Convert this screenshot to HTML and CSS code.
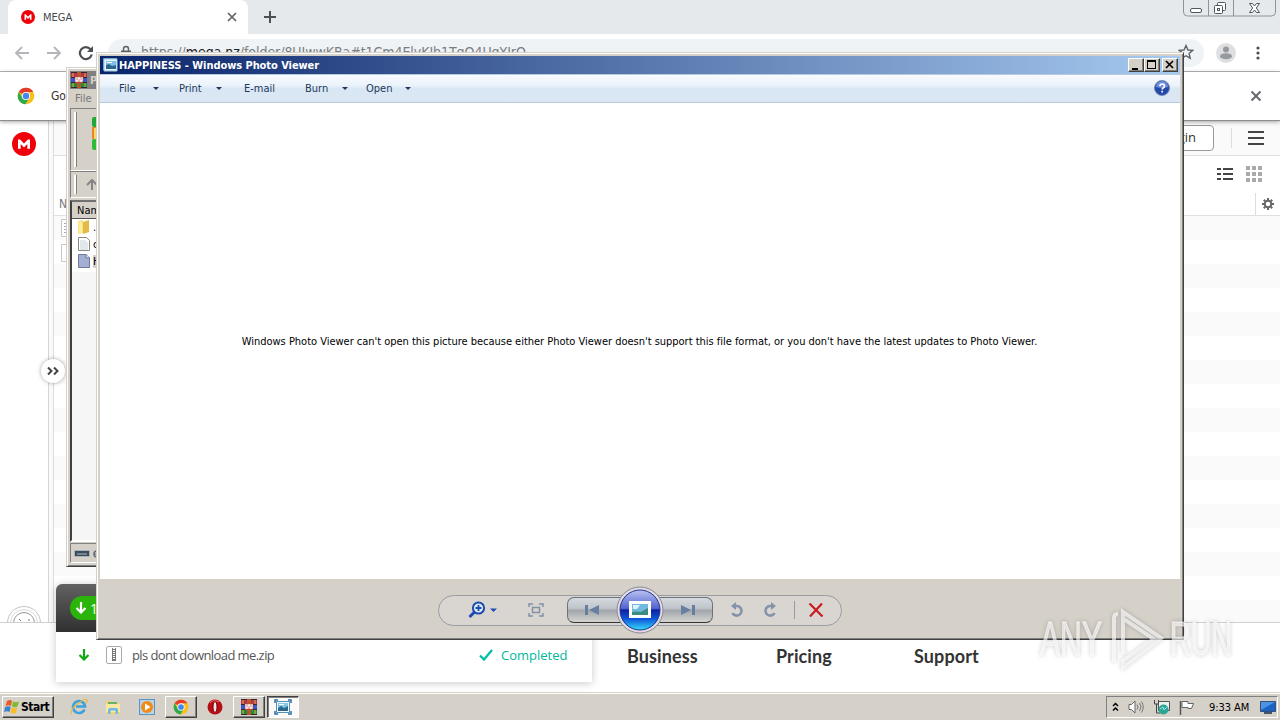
FILE: index.html
```
<!DOCTYPE html>
<html lang="en">
<head>
    <meta charset="UTF-8">
    <meta name="viewport" content="width=device-width, initial-scale=1.0">
    <title>HAPPINESS - Windows Photo Viewer</title>
    <link rel="stylesheet" href="styles.css">
</head>
<body>
    <!-- Shared icons -->
    <svg class="defs" width="0" height="0">
        <symbol id="chrome" viewBox="0 0 18 18">
            <circle cx="9" cy="9" r="8.3" fill="#fbc116"/>
            <path d="M9 9 1.8 4.9A8.3 8.3 0 0 1 16.2 4.9H9z" fill="#e33b2e"/>
            <path d="M1.8 4.9A8.3 8.3 0 0 0 8.3 17.3L12.4 11 9 9 5.6 11z" fill="#2da94f"/>
            <circle cx="9" cy="9" r="4.1" fill="#fff"/>
            <circle cx="9" cy="9" r="3.2" fill="#4486f4"/>
        </symbol>
        <symbol id="mega" viewBox="0 0 24 24">
            <circle cx="12" cy="12" r="12" fill="#f0000a"/>
            <path d="M6 16.8V7.400h2.100l3.900 4 3.900-4H18v9.400h-2.700v-4.700L12 15.400l-3.300-3.300v4.700z" fill="#fff"/>
        </symbol>
        <symbol id="rar" viewBox="0 0 18 18">
            <path d="M1 1h16v5H1z" fill="#b8324a"/>
            <path d="M1 6h16v5H1z" fill="#3c55c8"/>
            <path d="M1 11h16v6H1z" fill="#258a35"/>
            <path d="M1 1h16v1H1zM1 6h16v1H1zM1 11h16v1H1zM1 16h16v1H1z" fill="#3a2330"/>
            <path d="M7 1h4v16H7z" fill="#b3572d"/>
            <path d="M5 6h8v6H5z" fill="#c9432d"/>
            <path d="M6 6v4h2V7h2v3h2V6" fill="none" stroke="#fff" stroke-width="1.3"/>
            <path d="M3 2v4M15 2v4M3 12v4M15 12v4" stroke="#d9b545"/>
        </symbol>
        <symbol id="photo" viewBox="0 0 18 16">
            <path d="M1 1h14v12H1z" fill="#4a88b5"/>
            <path d="M2 2h13v12H2z" fill="#e9f6fc" stroke="#9cc9e2"/>
            <path d="M4 4h10v8H4z" fill="#80bfe4"/>
            <path d="M4 8l3-1 3 2 4-1v4H4z" fill="#2c678e"/>
            <path d="M5 5h5v1H5z" fill="#fff"/>
        </symbol>
        <symbol id="photo-task" viewBox="0 0 18 16">
            <path d="M1 4V1h3M14 1h3v3M17 12v3h-3M4 15H1v-3" fill="none" stroke="#2c6ea3" stroke-width="1.500"/>
            <path d="M2.500 2.500h13v11h-13z" fill="#eef8fd" stroke="#5590b8"/>
            <path d="M4 4h10v8H4z" fill="#86c3e6"/>
            <path d="M4 9l3-2 3 2 4-2v5H4z" fill="#2c678e"/>
            <path d="M5 5h5v1H5z" fill="#fff"/>
        </symbol>
        <linearGradient id="orb" x2="0" y2="1">
            <stop offset="0" stop-color="#b9c3f0"/><stop offset=".46" stop-color="#5263cf"/>
            <stop offset=".5" stop-color="#0c22a4"/><stop offset=".72" stop-color="#0e56d8"/><stop offset="1" stop-color="#37dcff"/>
        </linearGradient>
    </svg>

    <div class="desktop">
        <!-- Browser -->
        <div class="browser">
            <div class="tabstrip">
                <div class="tab">
                    <svg width="14" height="14"><use href="#mega"/></svg>
                    <span>MEGA</span>
                    <svg class="tab-close" width="10" height="10" viewBox="0 0 10 10"><path d="M1 1l8 8M9 1L1 9" stroke="#5f6368" stroke-width="1.7"/></svg>
                </div>
                <svg class="tab-new" width="14" height="14" viewBox="0 0 14 14"><path d="M7 1v12M1 7h12" stroke="#4c4f53" stroke-width="2"/></svg>
                <svg class="caption" width="94" height="18" viewBox="0 0 94 18" fill="none" stroke="#8d949b">
                    <path d="M.5 0v12q0 4 4 4h84q4 0 4-4V0M25.500 0v16M50.500 0v16"/>
                    <rect x="7.500" y="8.500" width="11" height="4" rx="1.500" fill="#fff" stroke="#50565c"/>
                    <rect x="34.500" y="2.500" width="8" height="8" rx="1" fill="#fff" stroke="#50565c"/>
                    <rect x="31.500" y="5.500" width="8" height="8" rx="1" fill="#fff" stroke="#50565c"/>
                    <rect x="34.500" y="8.500" width="2" height="2" stroke="#50565c"/>
                    <path d="M66.500 3.500h3l2 2.500 2-2.500h3l-3.200 4.500 3.200 4.500h-3l-2-2.500-2 2.500h-3l3.200-4.500z" fill="#fff" stroke="#50565c"/>
                </svg>
            </div>
            <div class="toolbar">
                <svg class="nav" width="80" height="16" viewBox="0 0 80 16" fill="none" stroke="#b3b5b8" stroke-width="1.8">
                    <path d="M15 8H2M8 2L2 8l6 6M33 8h13M40 2l6 6-6 6"/>
                    <path d="M76.500 4.200A6 6 0 1 0 77.700 9.500" stroke="#4c4f53" stroke-width="2.200"/>
                    <path d="M79 1v6h-6z" fill="#4c4f53" stroke="none"/>
                </svg>
                <div class="omnibox">
                    <svg width="10" height="14" viewBox="0 0 10 14"><path d="M2.500 6V4a2.500 2.500 0 0 1 5 0v2" fill="none" stroke="#5f6368" stroke-width="1.500"/><path d="M0 5.500h10V13H0z" fill="#5f6368"/></svg>
                    <span class="url">https://<b>mega.nz</b>/folder/8UIwwKBa#t1Cm4ElyKIb1TgO4UgYJrQ</span>
                    <svg class="star" width="16" height="16" viewBox="0 0 16 16"><path d="M8 1.500l2 4.500 4.700.4-3.600 3.100 1.100 4.700L8 11.700l-4.200 2.500 1.100-4.700L1.300 6.400 6 6z" fill="none" stroke="#5f6368" stroke-width="1.400"/></svg>
                </div>
                <svg class="avatar" width="20" height="20" viewBox="0 0 20 20"><circle cx="10" cy="10" r="10" fill="#dedfe1"/><circle cx="10" cy="6.500" r="3" fill="#96999d"/><ellipse cx="10" cy="13.200" rx="6" ry="3" fill="#96999d"/></svg>
                <svg class="dots" width="4" height="14" viewBox="0 0 4 14" fill="#4c4f53"><circle cx="2" cy="2" r="1.600"/><circle cx="2" cy="7" r="1.600"/><circle cx="2" cy="12" r="1.600"/></svg>
            </div>
            <div class="infobar">
                <svg width="18" height="18"><use href="#chrome"/></svg>
                <span>Go</span>
                <svg class="info-close" width="12" height="12" viewBox="0 0 12 12"><path d="M1.500 1.500l9 9M10.500 1.500l-9 9" stroke="#5f6368" stroke-width="1.800"/></svg>
            </div>

            <div class="page">
                <div class="rail">
                    <svg class="rail-logo" width="24" height="24"><use href="#mega"/></svg>
                    <svg class="rail-dial" width="36" height="17" viewBox="0 0 36 17" fill="none" stroke="#c4c4c4"><circle cx="18" cy="18" r="16.500"/><circle cx="18" cy="18" r="13.500" stroke="#dadada"/><circle cx="18" cy="18" r="10.500" stroke="#999"/><path d="M13 14l2 2M22 15h2" stroke="#777"/></svg>
                </div>
                <div class="gutter"></div>
                <div class="files">
                    <div class="files-head">
                        <div class="login">Login</div>
                        <div class="sep"></div>
                        <svg width="16" height="14" viewBox="0 0 16 14"><path d="M0 1h16M0 7h16M0 13h16" stroke="#444" stroke-width="2"/></svg>
                    </div>
                    <div class="files-tools">
                        <svg width="16" height="14" viewBox="0 0 16 14"><path d="M0 2h4M6 2h10M0 7h4M6 7h10M0 12h4M6 12h10" stroke="#444" stroke-width="2"/></svg>
                        <svg width="16" height="16" viewBox="0 0 16 16"><path d="M0 2h4M6 2h4M12 2h4M0 8h4M6 8h4M12 8h4M0 14h4M6 14h4M12 14h4" stroke="#aaa" stroke-width="4"/></svg>
                    </div>
                    <div class="files-cols">
                        <span>N</span>
                        <div class="gear">
                            <svg width="12" height="12" viewBox="0 0 12 12"><circle cx="6" cy="6" r="3.300" fill="none" stroke="#666" stroke-width="2"/><path d="M6 0v2M6 10v2M0 6h2M10 6h2M1.800 1.800l1.400 1.400M8.800 8.800l1.400 1.400M1.800 10.200l1.400-1.400M8.800 3.200l1.400-1.400" stroke="#666" stroke-width="2"/></svg>
                        </div>
                    </div>
                    <div class="rows">
                        <svg width="14" height="46" viewBox="0 0 14 46" fill="#fff" stroke="#c6c6c6"><path d="M14 .5H.5v17H14M14 25.500H.5v17H14"/><path d="M3 4.500h3M3 7.500h3M3 10.500h3M3 13.500h3" stroke="#aaa"/></svg>
                    </div>
                </div>
                <div class="collapse"><svg width="12" height="10" viewBox="0 0 12 10"><path d="M1 1.500L4.500 5 1 8.500M7 1.500L10.500 5 7 8.500" fill="none" stroke="#444" stroke-width="2"/></svg></div>
            </div>
            <div class="footer">
                <span>Business</span>
                <span>Pricing</span>
                <span>Support</span>
            </div>
        </div>

        <!-- Transfer panel -->
        <div class="transfers">
            <div class="transfers-head">
                <div class="badge"><svg width="12" height="12" viewBox="0 0 12 12"><path d="M6 0v10M1.500 6L6 10.500 10.500 6" fill="none" stroke="#fff" stroke-width="2.200"/></svg>1</div>
            </div>
            <div class="transfer">
                <svg width="12" height="12" viewBox="0 0 12 12"><path d="M6 0v10M1.500 6L6 10.500 10.500 6" fill="none" stroke="#12a810" stroke-width="2.200"/></svg>
                <svg class="zip" width="16" height="18" viewBox="0 0 16 18"><rect x=".5" y=".5" width="15" height="17" rx="1.500" fill="#fff" stroke="#aaa"/><path d="M8 2v13" stroke="#777" stroke-width="4"/><path d="M8 2v12" stroke="#fff" stroke-width="2" stroke-dasharray="1 1"/></svg>
                <span class="name">pls dont download me.zip</span>
                <svg class="check" width="14" height="12" viewBox="0 0 14 12"><path d="M1 6.500L5 10.500 13 1" fill="none" stroke="#00bfa5" stroke-width="2.300"/></svg>
                <span class="done">Completed</span>
            </div>
        </div>

        <!-- Archive window -->
        <div class="window archive">
            <div class="archive-title"><svg width="18" height="18"><use href="#rar"/></svg>P</div>
            <div class="archive-menu">File</div>
            <div class="band band-big">
                <svg width="24" height="34" viewBox="0 0 24 34"><rect width="20" height="10" rx="2" fill="#1faa37"/><rect y="10" width="20" height="12" fill="#e8862c"/><rect y="22" width="20" height="11" rx="2" fill="#2fbb35"/><path d="M3 11v10h4" fill="none" stroke="#ffd56b" stroke-width="2"/></svg>
            </div>
            <div class="band band-small">
                <svg width="12" height="11" viewBox="0 0 12 11"><path d="M6 11V1M1 6l5-5 5 5" fill="none" stroke="#858585" stroke-width="2"/></svg>
            </div>
            <div class="list">
                <div class="list-head">Name</div>
                <div class="item"><svg width="14" height="16" viewBox="0 0 14 16"><path d="M1 2l5-1v13l-5 1z" fill="#f8e07a"/><path d="M6 3l6-2v12l-6 2z" fill="#e3bb45"/><path d="M2 3h3v11H2z" fill="#fbeea2"/></svg>..</div>
                <div class="item"><svg width="14" height="16" viewBox="0 0 14 16"><path d="M1.500 1.500h8l3 3v10h-11z" fill="#fff" stroke="#888"/><path d="M3 5h6M3 7h8M3 9h8M3 11h8M3 13h8" stroke="#c6d0da"/></svg>c</div>
                <div class="item"><svg width="14" height="16" viewBox="0 0 14 16"><path d="M1.500 1.500h8l3 3v10h-11z" fill="#a4aed2" stroke="#727a9b"/><path d="M9 1v4h4" fill="#dde" stroke="#727a9b"/></svg><span class="selected">H</span></div>
            </div>
            <div class="archive-status"><svg width="26" height="8" viewBox="0 0 26 8"><rect x=".5" y=".5" width="15" height="6" rx="1" fill="#3c4b56" stroke="#a3b6c2"/><path d="M3 4h10" stroke="#a8c0cc"/><circle cx="23" cy="4" r="3" fill="none" stroke="#667" stroke-width="1.500"/><path d="M20 4h5" stroke="#667"/></svg></div>
        </div>

        <!-- Photo Viewer window -->
        <div class="window viewer">
            <div class="titlebar">
                <svg width="18" height="16"><use href="#photo"/></svg>
                <span>HAPPINESS - Windows Photo Viewer</span>
                <div class="buttons">
                    <div class="btn"><svg width="14" height="12"><path d="M3 9h6v2H3z"/></svg></div>
                    <div class="btn"><svg width="14" height="12"><path d="M2 1h9v9H2zM3 3v6h7V3z" fill-rule="evenodd"/></svg></div>
                    <div class="btn close"><svg width="14" height="12"><path d="M3 2l7 7M10 2L3 9" stroke="#000" stroke-width="1.700"/></svg></div>
                </div>
            </div>
            <div class="menubar">
                <span class="menu file">File</span><i class="arrow"></i>
                <span class="menu print">Print</span><i class="arrow"></i>
                <span class="menu email">E-mail</span>
                <span class="menu burn">Burn</span><i class="arrow"></i>
                <span class="menu open">Open</span><i class="arrow"></i>
                <svg class="help" width="16" height="16" viewBox="0 0 16 16"><circle cx="8" cy="8" r="7.500" fill="#2549a8" stroke="#7b8db5"/><path d="M2 7a6 6 0 0 1 12 0q-6 2-12 0z" fill="#6d8fdc"/><path d="M5.800 6.200Q6 4 8.200 4t2.200 2q0 1.200-1.300 1.900-.9.500-.9 1.600M8.200 10.800v1.600" fill="none" stroke="#fff" stroke-width="1.700"/></svg>
            </div>
            <div class="message">Windows Photo Viewer can't open this picture because either Photo Viewer doesn't support this file format, or you don't have the latest updates to Photo Viewer.</div>
            <div class="controls">
                <div class="pill">
                    <svg class="zoom" width="30" height="18" viewBox="0 0 30 18"><circle cx="10.500" cy="7" r="5.600" fill="#dcebfb" stroke="#1c4cae" stroke-width="2"/><path d="M6.500 11L1.500 16" stroke="#1c4cae" stroke-width="3"/><path d="M10.500 4v6M7.500 7h6" stroke="#1c4cae" stroke-width="1.800"/><path d="M22 7.500h7L25.500 11z" fill="#1c4cae"/></svg>
                    <svg class="fit" width="16" height="14" viewBox="0 0 16 14" fill="none" stroke="#8291a8" stroke-width="1.500"><path d="M1 4V1h4M11 1h4v3M15 10v3h-4M5 13H1v-3"/><rect x="4.500" y="4.500" width="7" height="5"/></svg>
                    <div class="skip">
                        <svg width="14" height="10" viewBox="0 0 14 10" fill="#667f9f"><path d="M0 0h3v10H0zM14 0v10L4 5z"/></svg>
                        <svg width="14" height="10" viewBox="0 0 14 10" fill="#667f9f"><path d="M11 0h3v10h-3zM0 0v10l10-5z"/></svg>
                        <svg class="orb" width="48" height="48" viewBox="0 0 48 48">
                            <circle cx="24" cy="24" r="23" fill="#dedbe2" stroke="#8b8799"/>
                            <circle cx="24" cy="24" r="20" fill="url(#orb)" stroke="#26348c"/>
                            <path d="M13 15h22v17H13z" fill="#fff"/>
                            <path d="M16 18h16v11H16z" fill="#70b9df"/>
                            <path d="M16 26q5-1 9 0l7-4v7H16z" fill="#3a8d82"/>
                            <path d="M17 19h7l-3 4h-4z" fill="#dff3fb"/>
                        </svg>
                    </div>
                    <svg class="undo" width="14" height="16" viewBox="0 0 14 16"><path d="M4 4h3a4.800 4.800 0 1 1-4.500 7" fill="none" stroke="#8593aa" stroke-width="2.600"/><path d="M6 0v8L1 4z" fill="#8593aa"/></svg>
                    <svg class="redo" width="14" height="16" viewBox="0 0 14 16"><path d="M10 4H7a4.800 4.800 0 1 0 4.500 7" fill="none" stroke="#8593aa" stroke-width="2.600"/><path d="M8 0v8l5-4z" fill="#8593aa"/></svg>
                    <div class="divider"></div>
                    <svg class="delete" width="16" height="14" viewBox="0 0 16 14"><path d="M1.500.5l13 13M14 .5L2 13.500" stroke="#c81c22" stroke-width="2.200"/></svg>
                </div>
            </div>
        </div>

        <!-- Taskbar -->
        <div class="taskbar">
            <div class="start">
                <svg width="16" height="16" viewBox="0 0 16 16"><path d="M3 2q3-2 5 0L7 7Q4 5.500 1.500 7z" fill="#e85d23"/><path d="M9 2.300q3 1.700 6 0L13.500 7.500q-3 1.500-5.500 0z" fill="#7dba2f"/><path d="M1.200 8q3-1.500 5.500 0L5.500 13Q3 11.500 0 13z" fill="#3b82d0"/><path d="M7.700 8.500q3 1.500 5.500 0L12 13.700q-3 1.600-5.500 0z" fill="#f7bd23"/></svg>
                <b>Start</b>
            </div>
            <div class="task"><svg width="18" height="18" viewBox="0 0 18 18"><path d="M14.500 11.500A6 6 0 1 1 15 8.500H6" fill="none" stroke="#3ca1e0" stroke-width="2.600"/><path d="M1.500 16Q-.5 12 8 5.500T17 2.500q.5 1-1.500 3" fill="none" stroke="#e9bc3b" stroke-width="1.300"/></svg></div>
            <div class="task"><svg width="18" height="18" viewBox="0 0 18 18"><path d="M2 3h6l1 2h7v11H2z" fill="#f0d478"/><path d="M4 4h9v4H4z" fill="#69b06b"/><path d="M2 6h14v8H2z" fill="#f9e8a3"/><path d="M4 16v-4q0-2 2-2h6q2 0 2 2v4h-2.500v-3.500h-5V16z" fill="#6db8e6"/></svg></div>
            <div class="task"><svg width="18" height="18" viewBox="0 0 18 18"><rect x="1.500" y="1.500" width="15" height="15" fill="#b3d6ed" stroke="#5b94c1"/><circle cx="9" cy="9" r="6" fill="#f28a18"/><path d="M7 5.500v7L12.500 9z" fill="#fff"/></svg></div>
            <div class="task open"><svg width="16" height="16"><use href="#chrome"/></svg></div>
            <div class="task"><svg width="16" height="16" viewBox="0 0 16 16"><ellipse cx="8" cy="8" rx="7.500" ry="7.500" fill="#b80f16"/><ellipse cx="8" cy="8" rx="2" ry="5.500" fill="#eee8e2" stroke="#700"/><path d="M3 4q3-4 9-1" stroke="#e66" fill="none"/></svg></div>
            <div class="task open"><svg width="18" height="18"><use href="#rar"/></svg></div>
            <div class="task open active"><svg width="18" height="16"><use href="#photo-task"/></svg></div>
            <div class="tray">
                <svg width="7" height="10" viewBox="0 0 7 10"><path d="M1 4l2.500-2.500L6 4M1 8.500L3.500 6 6 8.500" fill="none" stroke="#000" stroke-width="1.500"/></svg>
                <svg width="16" height="14" viewBox="0 0 16 14"><path d="M1 4.500h2.500L7 1v12L3.500 9.500H1z" fill="#fff" stroke="#666"/><path d="M9 4.500q2 2.500 0 5M11.500 3q3 4 0 8M13.500 1.500q3.500 5.500 0 11" fill="none" stroke="#777"/></svg>
                <svg width="17" height="16" viewBox="0 0 17 16"><path d="M5.500 2.500h11v9h-11z" fill="#e9f2ef" stroke="#555"/><path d="M1.500 1v4h4V1M3.500 5v9h4" fill="none" stroke="#444"/><circle cx="10.500" cy="10.500" r="5" fill="#2ba594"/><path d="M7 10l3-2 1 3 3-3" stroke="#9fe2e5" fill="none"/></svg>
                <svg width="16" height="15" viewBox="0 0 16 15"><path d="M1.500 1v14" stroke="#555" stroke-width="1.500"/><path d="M3 1.500h6v2h5.500l-2 5H9v-1H3z" fill="#fff" stroke="#666"/></svg>
                <span>9:33 AM</span>
                <svg class="show-desktop" width="16" height="13" viewBox="0 0 16 13"><path d="M.5.500h15v10H.5z" fill="#1c62c4" stroke="#344f7a"/><path d="M1 1h14L1 9z" fill="#4b93e3"/><path d="M4 11h8v2H4z" fill="#46546a"/></svg>
            </div>
        </div>

        <!-- Watermark -->
        <svg class="watermark" width="245" height="70" viewBox="0 0 245 70">
            <text x="5" y="51" textLength="62" lengthAdjust="spacingAndGlyphs">ANY</text>
            <text x="135" y="51" textLength="62" lengthAdjust="spacingAndGlyphs">RUN</text>
            <path d="M79 58V14q0-4 4-4M88 50V8l38 26-38 29v-6l31-22-30-20"/>
        </svg>
    </div>
</body>
</html>
```
FILE: styles.css
```
* {
    margin: 0;
    padding: 0;
    box-sizing: border-box;
}

body {
    width: 1280px;
    height: 720px;
    overflow: hidden;
    font-family: 'DejaVu Sans Condensed', 'DejaVu Sans', sans-serif;
    font-stretch: condensed;
    font-size: 11px;
    color: #000;
}

svg {
    display: block;
    flex: none;
}

.defs {
    position: absolute;
}

.desktop {
    position: relative;
    width: 1280px;
    height: 720px;
    overflow: hidden;
    display: flex;
    flex-direction: column;
    background: #fff;
}

/* Browser */
.browser {
    height: 692px;
    display: flex;
    flex-direction: column;
    isolation: isolate;
}

.tabstrip {
    height: 34px;
    background: #e5e9ec;
    display: flex;
    align-items: center;
    padding-left: 8px;
}

.tab {
    width: 240px;
    height: 34px;
    background: #fff;
    border-radius: 8px 8px 0 0;
    display: flex;
    align-items: center;
    padding: 0 11px 0 13px;
    gap: 8px;
    font-size: 11px;
    color: #45494d;
}

.tab-close {
    margin-left: auto;
}

.tab-new {
    margin-left: 15px;
}

.caption {
    margin-left: auto;
    margin-right: 3px;
    align-self: flex-start;
}

.toolbar {
    height: 38px;
    display: flex;
    align-items: center;
    padding-left: 14px;
    border-bottom: 1px solid #b6b7b9;
}

.omnibox {
    width: 1096px;
    height: 28px;
    margin-left: 14px;
    border-radius: 14px;
    background: #f0f3f5;
    display: flex;
    align-items: center;
    padding: 0 10px 2px 13px;
}

.url {
    margin-left: 10px;
    font-size: 14px;
    letter-spacing: -0.05px;
    color: #7a7e83;
    white-space: nowrap;
}

.url b {
    font-weight: normal;
    color: #222;
}

.star {
    margin-left: auto;
}

.avatar {
    margin-left: 12px;
}

.dots {
    margin-left: 20px;
}

.infobar {
    height: 49px;
    display: flex;
    align-items: center;
    padding: 0 18px 0 17px;
    border-bottom: 1px solid #8d8d8d;
    box-shadow: 0 1px 4px rgba(0, 0, 0, 0.35);
    position: relative;
    z-index: 1;
    background: #fff;
    font-size: 12px;
    color: #333;
}

.infobar span {
    margin-left: 16px;
}

.info-close {
    margin-left: auto;
}

/* MEGA page */
.page {
    position: relative;
    height: 501px;
    display: flex;
}

.rail {
    width: 48px;
    display: flex;
    flex-direction: column;
    justify-content: space-between;
    align-items: center;
    padding-top: 11px;
}

.gutter {
    width: 6px;
    border-left: 1px solid #d6d6d6;
    border-right: 1px solid #dcdcdc;
    background: #fafafa;
}

.files {
    flex: 1;
    display: flex;
    flex-direction: column;
}

.files-head {
    height: 35px;
    background: #fafafa;
    border-bottom: 1px solid #e0e0e0;
    display: flex;
    justify-content: flex-end;
    align-items: center;
    padding-right: 16px;
}

.login {
    width: 70px;
    height: 26px;
    border: 1px solid #999;
    border-radius: 4px;
    background: #fff;
    font: 13px/23px 'Open Sans', sans-serif;
    text-align: right;
    padding-right: 17px;
    color: #333;
}

.sep {
    width: 1px;
    height: 20px;
    background: #ddd;
    margin: 0 16px 0 17px;
}

.files-tools {
    height: 37px;
    display: flex;
    justify-content: flex-end;
    align-items: center;
    gap: 13px;
    padding: 0 18px 1px 0;
}

.files-cols {
    height: 23px;
    border-bottom: 1px solid #e0e0e0;
    display: flex;
    justify-content: space-between;
    align-items: center;
    padding-left: 5px;
    font-size: 12px;
    color: #777;
}

.gear {
    width: 25px;
    height: 22px;
    border-left: 1px solid #ddd;
    display: flex;
    align-items: center;
    justify-content: center;
}

.rows {
    flex: 1;
    padding: 3px 0 0 7px;
    background: repeating-linear-gradient(#fafafa 0 24px, #fff 24px 48px);
}

.collapse {
    position: absolute;
    left: 41px;
    top: 238px;
    width: 24px;
    height: 24px;
    border-radius: 50%;
    background: #fff;
    box-shadow: 0 0 4px rgba(0, 0, 0, 0.35);
    display: flex;
    align-items: center;
    justify-content: center;
}

.footer {
    flex: 1;
    border-top: 1px solid #d0d0d0;
    background: #fff;
    padding: 22px 0 0 627px;
    display: flex;
    font: bold 18px/22px Lato, sans-serif;
    letter-spacing: 0.1px;
    color: #333;
}

.footer span:nth-child(1) {
    width: 149px;
}

.footer span:nth-child(2) {
    width: 138px;
}

/* Transfer panel */
.transfers {
    position: absolute;
    left: 56px;
    top: 584px;
    width: 536px;
    height: 98px;
    border-radius: 6px 6px 0 0;
    background: #fff;
    box-shadow: 0 1px 8px rgba(0, 0, 0, 0.22);
    overflow: hidden;
}

.transfers-head {
    height: 48px;
    background: linear-gradient(#626262, #303030);
    padding: 12px 14px;
}

.badge {
    width: 60px;
    height: 24px;
    border-radius: 12px;
    background: #2bb40a;
    display: flex;
    align-items: center;
    padding-left: 5px;
    gap: 3px;
    color: #fff;
    font: 14px 'Open Sans', sans-serif;
}

.transfer {
    height: 46px;
    display: flex;
    align-items: center;
    padding-left: 22px;
    font: 13px 'Open Sans', sans-serif;
    color: #555;
}

.zip {
    margin-left: 16px;
}

.transfer .name {
    width: 347px;
    margin-left: 10px;
    letter-spacing: -0.58px;
}

.transfer .done {
    margin-left: 8px;
    color: #00b79c;
}

/* Classic window frame */
.window {
    position: absolute;
    background: #d5d0c8;
    border: 1px solid;
    border-color: #d5d0c8 #404040 #404040 #d5d0c8;
    box-shadow: inset 1px 1px #fff, inset -1px -1px #808080;
    padding: 3px;
}

/* Archive */
.archive {
    left: 66px;
    top: 67px;
    width: 200px;
    height: 500px;
    display: flex;
    flex-direction: column;
}

.archive-title {
    height: 18px;
    background: #808080;
    color: #d5d0c8;
    font-weight: bold;
    display: flex;
    align-items: center;
    gap: 2px;
}

.archive-menu {
    height: 19px;
    padding-left: 5px;
    line-height: 19px;
    color: #777;
}

.band {
    border: 1px solid;
    border-color: #808080 #fff #fff #808080;
    padding-left: 15px;
    display: flex;
    align-items: center;
    background: linear-gradient(#808080, #808080) 5px 3px / 1px calc(100% - 6px) no-repeat, linear-gradient(#fff, #fff) 3px 3px / 2px calc(100% - 6px) no-repeat;
}

.band-big {
    height: 63px;
    padding-left: 21px;
    padding-bottom: 11px;
}

.band-small {
    height: 27px;
}

.list {
    height: 343px;
    margin-top: 2px;
    border: 2px solid;
    border-color: #707070 #fff #fff #404040;
    background: linear-gradient(#fff 70px, #f6f6f6 70px);
}

.list-head {
    height: 17px;
    background: #d5d0c8;
    border-bottom: 1px solid #555;
    padding-left: 5px;
    line-height: 18px;
}

.item {
    height: 17px;
    display: flex;
    align-items: center;
    padding-left: 5px;
    gap: 2px;
}

.selected {
    background: #d5d0c8;
}

.archive-status {
    height: 20px;
    margin-top: 1px;
    border: 1px solid;
    border-color: #808080 #fff #fff #808080;
    padding: 6px 0 0 3px;
}

/* Photo Viewer */
.viewer {
    left: 96px;
    top: 52px;
    width: 1088px;
    height: 588px;
    display: flex;
    flex-direction: column;
}

.titlebar {
    height: 18px;
    background: linear-gradient(90deg, #0a246a, #a6caf0);
    display: flex;
    align-items: center;
    padding: 0 2px 0 1px;
    color: #fff;
    font-weight: bold;
    letter-spacing: -0.06px;
}

.titlebar > svg {
    margin-left: 1px;
    margin-right: -1px;
}

.buttons {
    margin-left: auto;
    display: flex;
}

.btn {
    width: 16px;
    height: 14px;
    background: #d5d0c8;
    border: 1px solid;
    border-color: #fff #404040 #404040 #fff;
    box-shadow: inset -1px -1px #808080;
}

.btn.close {
    margin-left: 2px;
}

.menubar {
    height: 29px;
    padding: 0 10px 2px 19px;
    border: 1px solid #b7cbdf;
    border-width: 1px 0;
    background: linear-gradient(#f8fbfe 0, #eaf2fa 40%, #d9e6f3 50%, #dbe8f4 100%);
    display: flex;
    align-items: center;
    color: #1e395b;
}

.menu {
    padding-top: 1px;
}

.menu.file { width: 34px; }
.menu.print { width: 37px; margin-left: 20px; }
.menu.email { width: 61px; margin-left: 22px; }
.menu.burn { width: 37px; }
.menu.open { width: 39px; margin-left: 18px; }

.arrow {
    width: 6px;
    margin-top: 2px;
    border: 3px solid transparent;
    border-top-color: #1e395b;
    border-bottom: 0;
}

.help {
    margin-left: auto;
}

.message {
    height: 476px;
    background: #fff;
    line-height: 478px;
    text-align: center;
    white-space: nowrap;
    letter-spacing: -0.016px;
    padding-right: 1px;
}

.controls {
    flex: 1;
    display: flex;
    justify-content: center;
    padding-top: 16px;
}

.pill {
    width: 404px;
    height: 31px;
    border: 1px solid #9b9ba2;
    border-radius: 16px;
    background: #d9d6d1;
    display: flex;
    align-items: center;
    padding: 0 0 1px 29px;
}

.fit {
    margin-left: 30px;
}

.skip {
    position: relative;
    width: 146px;
    height: 26px;
    margin-left: 23px;
    border: 1px solid #6c717a;
    border-bottom-color: #333;
    border-radius: 7px;
    background: linear-gradient(#d5dade, #bdc3c9 45%, #a0a5ab 50%, #d5d4d0);
    display: flex;
    justify-content: space-between;
    align-items: center;
    padding: 0 17px;
}

.orb {
    position: absolute;
    left: 48px;
    top: -12px;
}

.undo {
    margin-left: 17px;
}

.redo {
    margin-left: 19px;
}

.divider {
    width: 1px;
    height: 18px;
    margin-left: 17px;
    background: #9a9a9a;
}

.delete {
    margin-left: 13px;
}

/* Taskbar */
.taskbar {
    height: 28px;
    background: #d5d0c8;
    border-top: 1px solid #d5d0c8;
    box-shadow: inset 0 1px #fff;
    display: flex;
    align-items: center;
    padding: 1px 2px 0;
}

.start {
    width: 52px;
    height: 22px;
    border: 1px solid;
    border-color: #fff #404040 #404040 #fff;
    box-shadow: inset -1px -1px #808080;
    display: flex;
    align-items: center;
    padding-left: 1px;
    gap: 1px;
    margin-right: 8px;
}

.start b {
    font-size: 12px;
    letter-spacing: -0.5px;
}

.task {
    width: 34px;
    height: 22px;
    display: flex;
    align-items: center;
    justify-content: center;
}

.task.open {
    width: 32px;
    margin: 0 1px;
    border: 1px solid;
    border-color: #fff #404040 #404040 #fff;
    box-shadow: inset -1px -1px #808080;
}

.task.active {
    border-color: #404040 #fff #fff #404040;
    box-shadow: inset 1px 1px #808080;
    background: #fbfaf9;
}

.tray {
    width: 172px;
    height: 22px;
    margin-left: auto;
    border: 1px solid;
    border-color: #808080 #fff #fff #808080;
    display: flex;
    align-items: center;
    padding: 0 1px 0 5px;
    gap: 9px;
}

.tray span {
    margin-left: 5px;
    white-space: nowrap;
    letter-spacing: -0.05px;
}

.show-desktop {
    margin-left: auto;
}

/* Watermark */
.watermark {
    position: absolute;
    left: 1035px;
    top: 604px;
    filter: drop-shadow(0 0 2px rgba(0, 0, 0, 0.3));
}

.watermark text {
    font: 48px 'Liberation Sans Narrow', 'Liberation Sans', sans-serif;
    fill: rgba(255, 255, 255, 0.6);
    stroke: rgba(255, 255, 255, 0.5);
    stroke-width: 1.5;
}

.watermark path {
    fill: none;
    stroke: rgba(255, 255, 255, 0.65);
    stroke-width: 4;
}
```
